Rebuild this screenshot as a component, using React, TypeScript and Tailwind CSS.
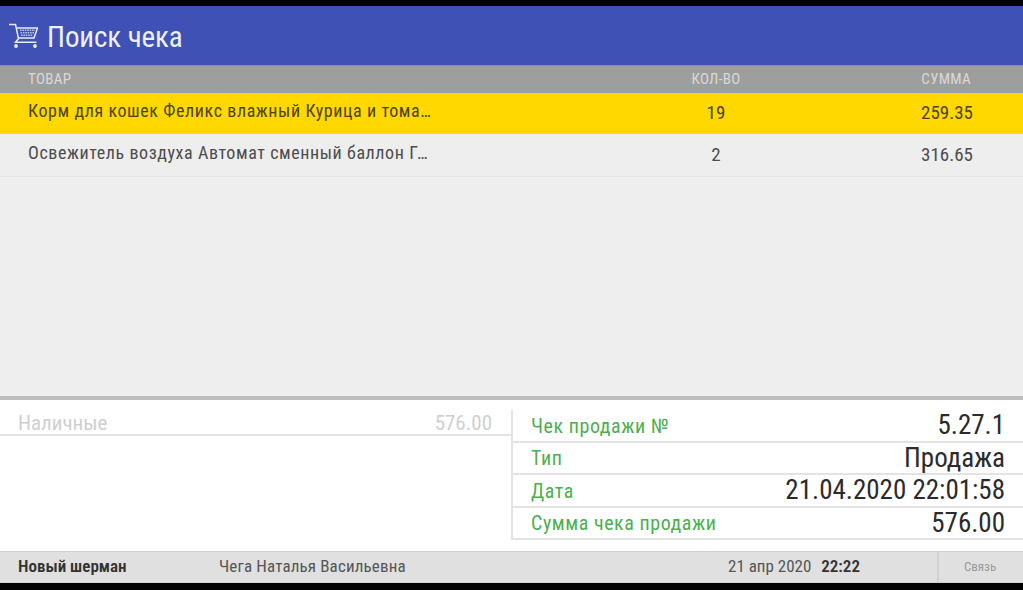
import { ReactNode } from "react";

function CartIcon() {
    return (
        <svg width="30" height="30" viewBox="0 0 30 30" fill="none" stroke="#e8ecfa" strokeWidth="1.5" className="shrink-0">
            <path d="M1 3.500h6.500l3 14L7.500 21.300h21" />
            <path d="M8.500 7h21l-3.500 10H10.500" />
            <path d="M12 9.300h15M12.500 11.800h13.500M13 14.300h12" stroke="#b4c0ee" strokeWidth="1.6" strokeDasharray="1.6 0.8" />
            <circle cx="8" cy="25" r="1.900" fill="#e8ecfa" stroke="none" />
            <circle cx="27" cy="25" r="1.900" fill="#e8ecfa" stroke="none" />
        </svg>
    );
}

function ItemRow({ name, qty, sum, active }: { name: string; qty: string; sum: string; active?: boolean }) {
    return (
        <div className={active ? "flex h-[41px] items-center bg-[#ffd800] text-[#4b4410]" : "flex h-[43px] items-center border-b border-[#e6e6e6] text-[#4d4d4d]"}>
            <div className={active ? "ml-[28px] -mt-[6px] w-[405px] truncate text-[18px] tracking-[0.58px]" : "ml-[28px] -mt-[5px] w-[405px] truncate text-[18px] tracking-[0.58px]"}>{name}</div>
            <div className="ml-[203px] w-[160px] text-center text-[19px]">{qty}</div>
            <div className="flex-1 pr-[50px] text-right text-[19px]">{sum}</div>
        </div>
    );
}

function InfoRow({ label, children, className }: { label: string; children: ReactNode; className: string }) {
    return (
        <div className={`flex items-center justify-between border-b-2 border-[#e3e3e3] pl-[18px] pr-[18px] ${className}`}>
            <span className="text-[20px] tracking-[0.55px] text-[#4caf50]">{label}</span>
            <span className="text-[27px] text-[#2b2b2b]">{children}</span>
        </div>
    );
}

export default function App() {
    return (
        <div className="flex h-[590px] w-[1023px] flex-col overflow-hidden bg-black font-['Roboto',sans-serif] [font-stretch:condensed]">
            <div className="mt-[6px] flex h-[59px] items-center bg-[#3f51b5] pl-[8px] text-white">
                <CartIcon />
                <span className="ml-[9px] mt-[5px] text-[29px] tracking-[-0.1px] text-[#eef0fb]">Поиск чека</span>
            </div>
            <div className="flex h-[28px] items-center border-t border-[#8f8f8f] bg-[#9e9e9e] text-[15px] tracking-[0.3px] text-[#d9d9d9]">
                <div className="ml-[28px] w-[405px]">ТОВАР</div>
                <div className="ml-[203px] w-[160px] text-center">КОЛ-ВО</div>
                <div className="flex-1 pr-[52px] text-right">СУММА</div>
            </div>
            <div className="h-[303px] bg-[#eeeeee]">
                <ItemRow active name="Корм для кошек Феликс влажный Курица и томаты в желе" qty="19" sum="259.35" />
                <ItemRow name="Освежитель воздуха Автомат сменный баллон Горная свежесть" qty="2" sum="316.65" />
            </div>
            <div className="flex h-[155px] border-t-4 border-[#bdbdbd] bg-white pt-[10px]">
                <div className="w-[511px]">
                    <div className="flex h-[26px] items-center justify-between border-b-2 border-[#e3e3e3] pl-[18px] pr-[19px] pt-[3px] text-[21px] text-[#cfcfcf]">
                        <span>Наличные</span>
                        <span>576.00</span>
                    </div>
                </div>
                <div className="h-[130px] flex-1 border-l-2 border-[#e3e3e3]">
                    <InfoRow label="Чек продажи №" className="h-[33px]">5.27.1</InfoRow>
                    <InfoRow label="Тип" className="h-[32px]">Продажа</InfoRow>
                    <InfoRow label="Дата" className="h-[33px]">21.04.2020 22:01:58</InfoRow>
                    <InfoRow label="Сумма чека продажи" className="h-[32px]">576.00</InfoRow>
                </div>
            </div>
            <div className="flex h-[32px] items-center border-y border-[#cfcfcf] bg-[#e0e0e0] text-[#555555]">
                <div className="ml-[18px] w-[201px] text-[17px] font-semibold text-[#333333]">Новый шерман</div>
                <div className="w-[509px] text-[17px] tracking-[0.15px]">Чега Наталья Васильевна</div>
                <div className="w-[209px] text-[17px]">21 апр 2020 <span className="ml-[6px] font-semibold text-[#333333]">22:22</span></div>
                <div className="flex h-full flex-1 items-center justify-center border-l-2 border-[#d2d2d2] pr-[2px] text-[13px] text-[#9a9a9a]">Связь</div>
            </div>
        </div>
    );
}
